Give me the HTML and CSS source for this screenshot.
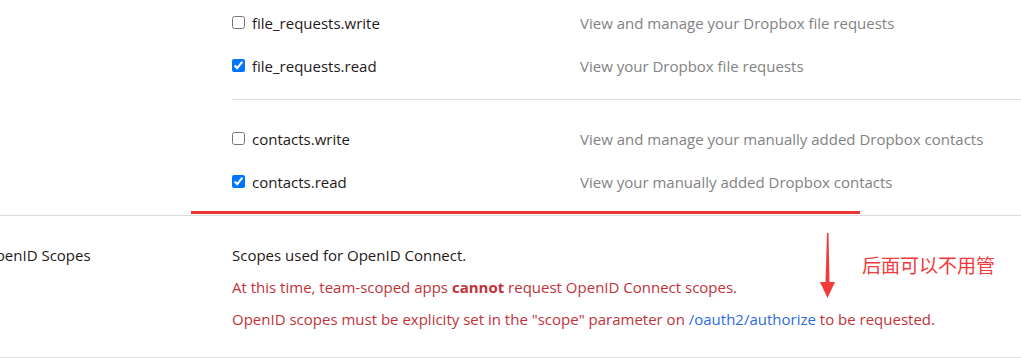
FILE: index.html
```html
<!DOCTYPE html>
<html lang="en">
<head>
    <meta charset="UTF-8">
    <meta name="viewport" content="width=device-width, initial-scale=1.0">
    <title>App permissions</title>
    <link rel="stylesheet" href="styles.css">
</head>
<body>
    <div class="page">
        <div class="section">
            <div class="section-label"></div>
            <div class="section-body">
                <div class="scope-group">
                    <label class="scope-row">
                        <span class="scope-name"><input type="checkbox"> file_requests.write</span>
                        <span class="scope-desc">View and manage your Dropbox file requests</span>
                    </label>
                    <label class="scope-row">
                        <span class="scope-name"><input type="checkbox" checked> file_requests.read</span>
                        <span class="scope-desc">View your Dropbox file requests</span>
                    </label>
                </div>
                <div class="scope-group">
                    <label class="scope-row">
                        <span class="scope-name"><input type="checkbox"> contacts.write</span>
                        <span class="scope-desc">View and manage your manually added Dropbox contacts</span>
                    </label>
                    <label class="scope-row">
                        <span class="scope-name"><input type="checkbox" checked> contacts.read</span>
                        <span class="scope-desc">View your manually added Dropbox contacts</span>
                    </label>
                </div>
            </div>
        </div>

        <div class="section openid">
            <div class="section-label">OpenID Scopes</div>
            <div class="section-body">
                <p>Scopes used for OpenID Connect.</p>
                <p class="warn">At this time, team-scoped apps <strong>cannot</strong> request OpenID Connect scopes.</p>
                <p class="warn">OpenID scopes must be explicity set in the "scope" parameter on <a href="#">/oauth2/authorize</a> to be requested.</p>
            </div>
        </div>
    </div>

    <!-- 标注 -->
    <div class="mark-line"></div>
    <svg class="mark-arrow" width="17" height="66" viewBox="0 0 17 66">
        <polygon points="8,0 9.5,0 10.5,49 16,49 8.5,65 1,49 6.5,49" fill="#f23a3a"/>
    </svg>
    <div class="mark-note">后面可以不用管</div>
</body>
</html>
```

FILE: styles.css
```css
body {
    margin: 0;
    font-family: "Open Sans", "Liberation Sans", Arial, sans-serif;
    font-size: 15px;
    color: #1e1919;
    background: #fff;
    overflow: hidden;
}
.page {
    margin: -16px 0 0 -16px;
}
.section {
    display: grid;
    grid-template-columns: 248px 1fr;
    border-bottom: 1px solid #dcdcdc;
}
.scope-group {
    padding: 17px 0 12px;
}
.scope-group + .scope-group {
    border-top: 1px solid #dcdcdc;
}
.scope-row {
    display: grid;
    grid-template-columns: 348px 1fr;
    align-items: center;
    height: 43px;
}
.scope-name {
    display: flex;
    align-items: center;
    gap: 7px;
}
.scope-name input {
    margin: 0;
    width: 13px;
    height: 13px;
}
.scope-desc {
    color: #828282;
}
.openid {
    padding: 28px 0 27px;
}
.openid .section-label {
    line-height: 22px;
}
.openid p {
    margin: 0 0 10px;
    line-height: 22px;
}
.openid p:last-child {
    margin-bottom: 0;
}
.warn {
    color: #c2323a;
}
.warn a {
    color: #2d6be3;
    text-decoration: none;
}
.mark-line {
    position: absolute;
    left: 191px;
    top: 211px;
    width: 669px;
    height: 3px;
    background: #ee3535;
}
.mark-arrow {
    position: absolute;
    left: 819px;
    top: 233px;
}
.mark-note {
    position: absolute;
    left: 862px;
    top: 255px;
    font-family: "Noto Sans CJK SC", sans-serif;
    font-size: 19px;
    line-height: 20px;
    color: #f23a3a;
}
```
